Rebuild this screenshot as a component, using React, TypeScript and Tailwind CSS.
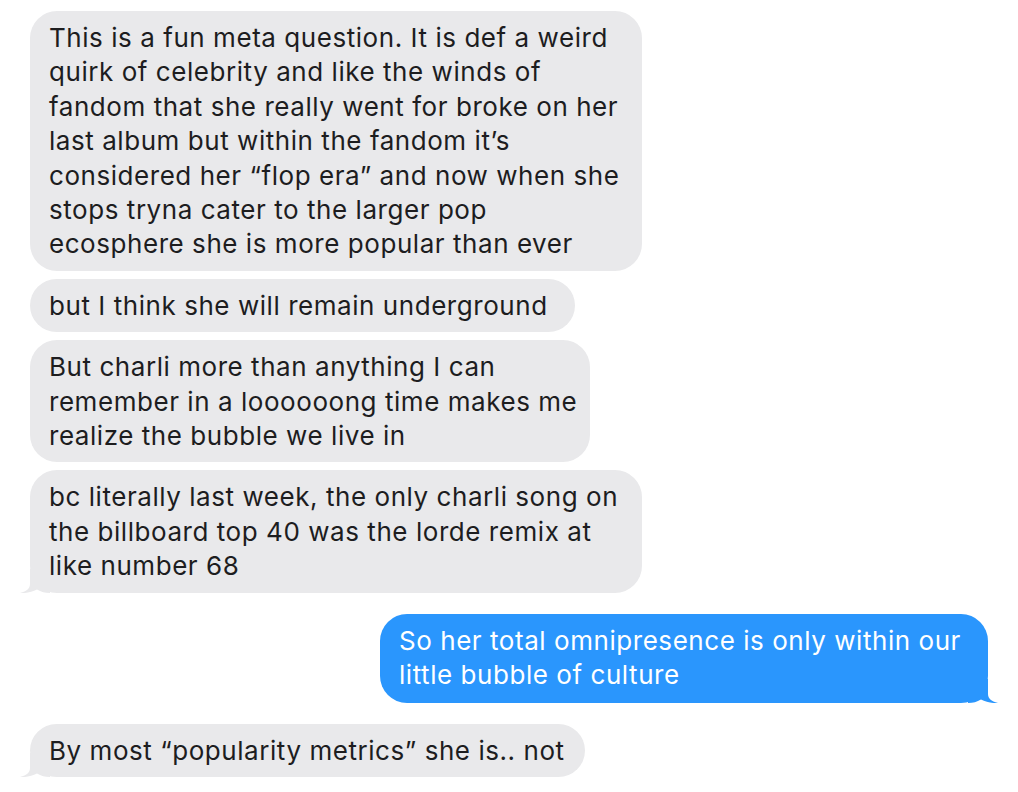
const font = { fontFamily: "Inter, 'Noto Sans', sans-serif" };

// iMessage-style tail drawn over the bubble's bottom corner
const Tail = ({ side, color }: { side: "left" | "right"; color: string }) => (
  <svg
    width="30"
    height="24"
    viewBox="0 0 30 24"
    className={side === "left" ? "absolute -left-[10px] bottom-0" : "absolute -right-[10px] bottom-0 -scale-x-100"}
  >
    <path d="M10 0 L10 15 C10 19 7 22.5 0 24 C6 24.5 12 23 17 20.5 C21 23 25 24 30 24 L30 0 Z" fill={color} />
  </svg>
);

const Gray = ({ lines, tail, w }: { lines: string[]; tail?: boolean; w: string }) => (
  <div className={`relative ${w} rounded-[27px] bg-[#e9e9eb] px-[19px] pt-[10px] pb-[9px] text-[#1d1d1f]`}>
    {lines.map((l, i) => (
      <div key={i} className="relative whitespace-nowrap">{l}</div>
    ))}
    {tail && <Tail side="left" color="#e9e9eb" />}
  </div>
);

export default function App() {
  return (
    <div
      className="w-[1018px] h-[792px] bg-white flex flex-col px-[30px] pt-[11px] text-[26px] leading-[34.4px] tracking-[0.55px]"
      style={font}
    >
      <div className="flex flex-col gap-[8px]">
        <Gray
          w="w-[612px]"
          lines={[
            "This is a fun meta question. It is def a weird",
            "quirk of celebrity and like the winds of",
            "fandom that she really went for broke on her",
            "last album but within the fandom it’s",
            "considered her “flop era” and now when she",
            "stops tryna cater to the larger pop",
            "ecosphere she is more popular than ever",
          ]}
        />
        <Gray w="w-[545px]" lines={["but I think she will remain underground"]} />
        <Gray
          w="w-[560px]"
          lines={["But charli more than anything I can", "remember in a loooooong time makes me", "realize the bubble we live in"]}
        />
        <Gray
          w="w-[612px]"
          tail
          lines={["bc literally last week, the only charli song on", "the billboard top 40 was the lorde remix at", "like number 68"]}
        />
      </div>
      <div className="flex justify-end mt-[21px]">
        <div className="relative w-[608px] rounded-[27px] bg-[#2a96fd] px-[19px] pt-[10px] pb-[10px] text-white">
          <div className="relative whitespace-nowrap">So her total omnipresence is only within our</div>
          <div className="relative whitespace-nowrap">little bubble of culture</div>
          <Tail side="right" color="#2a96fd" />
        </div>
      </div>
      <div className="mt-[21px]">
        <Gray w="w-[555px]" tail lines={["By most “popularity metrics” she is.. not"]} />
      </div>
    </div>
  );
}
